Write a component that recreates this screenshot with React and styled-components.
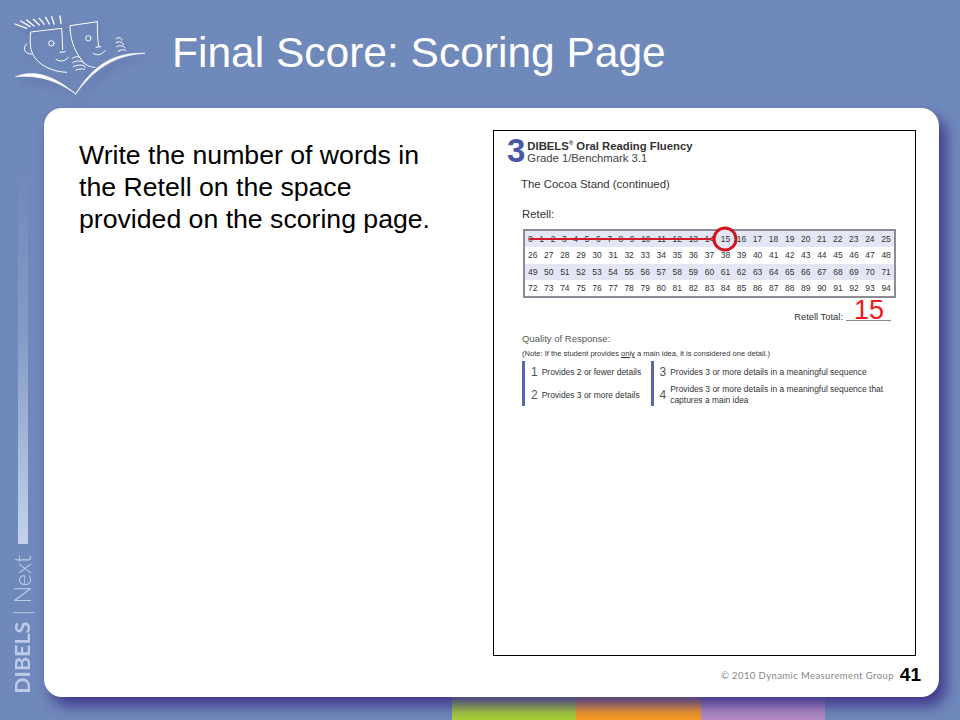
import React from 'react';
import styled, { createGlobalStyle } from 'styled-components';

const GlobalStyle = createGlobalStyle`
  html, body {
    margin: 0;
    padding: 0;
    background: #7089bb;
    font-family: "Liberation Sans", Arial, sans-serif;
  }
`

const Page = styled.div`
  width: 960px;
  height: 720px;
  overflow: hidden;
  display: flex;
  flex-direction: column;
  background: #7089bb;
`

const Header = styled.header`
  height: 108px;
  flex: none;
  display: flex;
  align-items: flex-start;
  padding-left: 10px;
  box-sizing: border-box;
`

const Logo = styled.svg`
  width: 140px;
  height: 90px;
  margin-top: 10px;
  flex: none;
  overflow: visible;
  filter: drop-shadow(4px 5px 4px rgba(60, 70, 130, .45));
`

const Title = styled.h1`
  margin: 28px 0 0 22px;
  font-size: 42.5px;
  line-height: 50px;
  font-weight: 400;
  color: #fff;
`

const Middle = styled.div`
  display: flex;
  height: 589px;
  flex: none;
`

const Rail = styled.aside`
  width: 44px;
  flex: none;
  display: flex;
  flex-direction: column;
  align-items: flex-start;
  padding: 62px 0 3px 18px;
  box-sizing: border-box;
  color: #bccbe6;
`

const RailBar = styled.div`
  width: 10px;
  height: 374px;
  flex: none;
  background: linear-gradient(to bottom, rgba(196, 210, 234, 0), rgba(196, 210, 234, .25) 45%, #c4d2ea);
`

const RailText = styled.div`
  margin: auto 0 0 -6px;
  writing-mode: vertical-rl;
  transform: rotate(180deg);
  font-family: Lato, sans-serif;
  font-size: 23.5px;
  line-height: 20px;
  white-space: nowrap;
`

const RailBold = styled.span`
  font-weight: 700;
  font-size: 21.5px;
`

const RailThin = styled.span`
  font-weight: 300;
`

const Card = styled.main`
  width: 895px;
  flex: none;
  position: relative;
  z-index: 1;
  background: #fff;
  border-radius: 18px;
  box-shadow: 7px 9px 14px rgba(62, 54, 138, .95);
  display: flex;
  flex-direction: column;
  padding: 22px 23px 0 35px;
  box-sizing: border-box;
`

const CardBody = styled.div`
  display: flex;
  justify-content: space-between;
  align-items: flex-start;
`

const Lead = styled.p`
  width: 365px;
  margin: 9px 0 0;
  font-size: 26.65px;
  line-height: 32px;
  color: #000;
`

const Sheet = styled.section`
  width: 423px;
  height: 526px;
  flex: none;
  border: 1px solid #000;
  box-sizing: border-box;
  padding: 5px 19px 0 13px;
  color: #333;
`

const SheetHead = styled.div`
  display: flex;
  align-items: center;
  gap: 2px;
`

const BigThree = styled.div`
  font-size: 33px;
  line-height: 30px;
  font-weight: 700;
  color: #4a55a6;
`

const SheetTitle = styled.div`
  font-size: 11.3px;
  line-height: 12px;
  font-weight: 700;
  color: #333;
  padding-top: 1px;
`

const SheetSub = styled.div`
  font-size: 11.3px;
  line-height: 12px;
  color: #444;
`

const Sup = styled.sup`
  font-size: 6px;
  line-height: 0;
`

const Story = styled.div`
  margin: 11px 0 0 14px;
  font-size: 11.4px;
  line-height: 14px;
`

const Label = styled.div`
  margin: 16px 0 0 15px;
  font-size: 11.4px;
  line-height: 14px;
`

const NumberTable = styled.div`
  margin: 8px 0 0 16px;
  border: 2px solid #8b8c94;
  width: 373px;
  box-sizing: border-box;
`

const NumberRow = styled.div`
  position: relative;
  height: 16.25px;
  display: flex;
  align-items: center;
  justify-content: space-between;
  padding: 0 3px;
  font-size: 8.5px;
  background: ${props => props.$shaded ? '#e3e7f5' : '#fff'};
`

const Num = styled.span`
  position: relative;
  ${props => props.$circled && `
    z-index: 1;
    &::before {
      content: '';
      position: absolute;
      z-index: -1;
      left: 50%;
      top: 50%;
      width: 19px;
      height: 19px;
      transform: translate(-50%, -50%);
      border: 3px solid #d3121e;
      border-radius: 50%;
      background: #e3e7f5;
    }
  `}
`

const StrikeLine = styled.div`
  position: absolute;
  left: 4px;
  top: 7px;
  width: 183px;
  height: 2px;
  background: #d01c28;
  border-radius: 1px;
`

const TotalRow = styled.div`
  position: relative;
  display: flex;
  justify-content: flex-end;
  align-items: flex-end;
  gap: 3px;
  width: 368px;
  margin: 10px 0 0 16px;
  height: 14px;
  font-size: 9.4px;
  line-height: 11px;
`

const TotalBlank = styled.div`
  position: relative;
  width: 45px;
  height: 1px;
  background: #888;
  margin-bottom: 1px;
`

const RedScore = styled.div`
  position: absolute;
  left: 8px;
  bottom: -4px;
  font-size: 27px;
  line-height: 30px;
  color: #f01818;
`

const Quality = styled.div`
  margin: 11px 0 0 15px;
  font-size: 9.5px;
  line-height: 12px;
  color: #555;
`

const Note = styled.div`
  margin: 4px 0 0 15px;
  font-size: 7.55px;
  line-height: 10px;
  color: #333;
`

const Rubric = styled.div`
  margin: 2px 0 0 15px;
  display: flex;
`

const RubricGroup = styled.div`
  width: ${props => props.$width}px;
  height: 45px;
  flex: none;
  border-left: 3.5px solid #5a66aa;
  box-sizing: border-box;
  padding-left: 6px;
  display: flex;
  flex-direction: column;
`

const RubricItem = styled.div`
  flex: 1;
  display: flex;
  align-items: center;
  gap: 4px;
  font-size: 8.45px;
  line-height: 10.5px;
  color: #333;
`

const RubricNum = styled.span`
  font-size: 12px;
  color: #555;
`

const Footer = styled.footer`
  margin: 6px -5px 0 0;
  display: flex;
  justify-content: flex-end;
  align-items: center;
  gap: 6px;
  height: 26px;
`

const Copy = styled.span`
  font-family: Lato, sans-serif;
  font-size: 9.5px;
  letter-spacing: .4px;
  color: #858585;
`

const PageNo = styled.span`
  font-size: 19px;
  font-weight: 700;
  color: #000;
`

const Strips = styled.div`
  height: 23px;
  flex: none;
  display: flex;
  padding-left: 452px;
`

const Strip = styled.div`
  width: ${props => props.$width}px;
  background: ${props => props.$color};
`

const range = (from, to) => Array.from({ length: to - from + 1 }, (_, i) => from + i);

const rows = [range(0, 25), range(26, 48), range(49, 71), range(72, 94)];

function DibelsLogo() {
  return (
    <Logo viewBox="0 0 420 270" fill="none" stroke="#fff" strokeWidth="3" strokeLinecap="round" strokeLinejoin="round">
      <path d="M15 42L50 55M32 33L60 50M50 30L72 48M70 28L88 45M88 25L103 43M107 22L118 42M125 20L132 42M150 18L153 40" strokeWidth="4" />
      <path d="M155 55L62 66C60 90 58 115 70 135C85 165 125 185 170 187" />
      <path d="M155 55C157 75 157 100 158 118" />
      <path d="M50 102C38 108 40 135 66 132" />
      <circle cx="124" cy="100" r="8" />
      <path d="M150 127L166 125" />
      <path d="M138 148C150 156 165 155 175 142" />
      <path d="M262 35L180 47C180 80 190 120 215 150C225 165 240 172 255 172" />
      <path d="M262 35C262 60 262 85 266 110" />
      <circle cx="235" cy="85" r="8" />
      <path d="M258 112L273 110" />
      <path d="M250 130C262 138 275 135 285 122" />
      <path d="M187 145C198 136 212 140 212 147M188 158C200 150 220 152 222 160M190 170C204 162 226 164 226 172M198 180C208 176 220 176 224 178" />
      <path d="M318 86C325 80 336 84 336 90M318 98C328 92 340 96 340 104M320 110C330 104 344 108 345 114M324 124C332 118 344 118 348 122" />
      <path d="M18 200C70 178 130 195 197 252C135 205 70 195 18 200Z" fill="#fff" strokeWidth="2" />
      <path d="M197 252C240 180 300 125 405 130C310 135 250 180 197 252Z" fill="#fff" strokeWidth="2" />
    </Logo>
  )
}

function App() {
  return (
    <Page>
      <GlobalStyle />
      <Header>
        <DibelsLogo />
        <Title>Final Score: Scoring Page</Title>
      </Header>
      <Middle>
        <Rail>
          <RailBar />
          <RailText>
            <RailBold>DIBELS</RailBold> <RailThin>| Next</RailThin>
          </RailText>
        </Rail>
        <Card>
          <CardBody>
            <Lead>Write the number of words in the Retell on the space provided on the scoring page.</Lead>
            <Sheet>
              <SheetHead>
                <BigThree>3</BigThree>
                <div>
                  <SheetTitle>DIBELS<Sup>®</Sup> Oral Reading Fluency</SheetTitle>
                  <SheetSub>Grade 1/Benchmark 3.1</SheetSub>
                </div>
              </SheetHead>
              <Story>The Cocoa Stand (continued)</Story>
              <Label>Retell:</Label>
              <NumberTable>
                {rows.map((row, index) => (
                  <NumberRow key={index} $shaded={index % 2 === 0}>
                    {row.map(n => <Num key={n} $circled={n === 15}>{n}</Num>)}
                    {index === 0 && <StrikeLine />}
                  </NumberRow>
                ))}
              </NumberTable>
              <TotalRow>
                Retell Total:
                <TotalBlank><RedScore>15</RedScore></TotalBlank>
              </TotalRow>
              <Quality>Quality of Response:</Quality>
              <Note>(Note: If the student provides <u>only</u> a main idea, it is considered one detail.)</Note>
              <Rubric>
                <RubricGroup $width={128.5}>
                  <RubricItem><RubricNum>1</RubricNum>Provides 2 or fewer details</RubricItem>
                  <RubricItem><RubricNum>2</RubricNum>Provides 3 or more details</RubricItem>
                </RubricGroup>
                <RubricGroup $width={240}>
                  <RubricItem><RubricNum>3</RubricNum>Provides 3 or more details in a meaningful sequence</RubricItem>
                  <RubricItem><RubricNum>4</RubricNum><span>Provides 3 or more details in a meaningful sequence that<br />captures a main idea</span></RubricItem>
                </RubricGroup>
              </Rubric>
            </Sheet>
          </CardBody>
          <Footer>
            <Copy>© 2010 Dynamic Measurement Group</Copy>
            <PageNo>41</PageNo>
          </Footer>
        </Card>
      </Middle>
      <Strips>
        <Strip $width={124} $color="#a8ce35" />
        <Strip $width={125} $color="#f79a22" />
        <Strip $width={124} $color="#b18cc2" />
      </Strips>
    </Page>
  )
}

export default App;
